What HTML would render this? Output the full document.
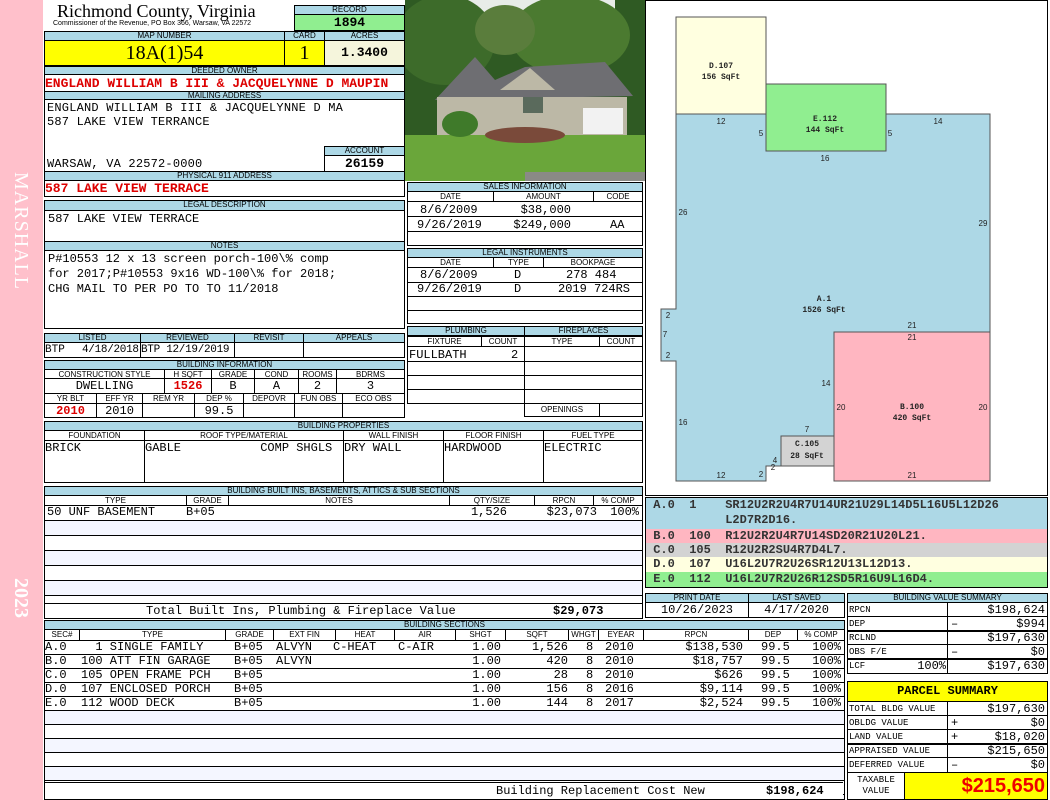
<!DOCTYPE html><html><head><meta charset="utf-8"><style>
*{box-sizing:border-box;margin:0;padding:0}
body{width:1050px;height:800px;position:relative;background:#fff;overflow:hidden;font-family:"Liberation Mono",monospace;font-size:12px;color:#000}
div{position:absolute}
.h{background:#add8e6;border:1px solid #000;font:8px/8px "Liberation Sans",sans-serif;text-align:center;white-space:nowrap;overflow:hidden}
.b{border:1px solid #000}
.t{white-space:pre;font-size:12px;line-height:14px}
.s{font:8px/9px "Liberation Sans",sans-serif;text-align:center;border:1px solid #000;white-space:nowrap;overflow:hidden}
.r{color:#d00;font-weight:bold}
.v{white-space:pre;font-size:12px;line-height:14px}
.ra{text-align:right}
</style></head><body>
<div style="left:0;top:0;width:43px;height:800px;background:#ffc0cb"></div>
<div style="left:32px;top:172px;transform-origin:0 0;transform:rotate(90deg);font:20px 'Liberation Serif',serif;color:#fff;white-space:nowrap;letter-spacing:1px">MARSHALL</div>
<div style="left:32px;top:578px;transform-origin:0 0;transform:rotate(90deg);font:bold 20px 'Liberation Serif',serif;color:#fff">2023</div>

<div style="left:57px;top:1px;font:18px 'Liberation Serif',serif">Richmond County, Virginia</div>
<div style="left:53px;top:20px;font:7px 'Liberation Sans',sans-serif">Commissioner of the Revenue, PO Box 366, Warsaw, VA 22572</div>
<div class="h" style="left:294px;top:5px;width:111px;height:10px">RECORD</div>
<div class="b" style="left:294px;top:14px;width:111px;height:17px;background:#90ee90;text-align:center;font-weight:bold;font-size:13px;line-height:16px">1894</div>
<div class="h" style="left:44px;top:31px;width:241px;height:10px">MAP NUMBER</div>
<div class="h" style="left:284px;top:31px;width:41px;height:10px">CARD</div>
<div class="h" style="left:324px;top:31px;width:81px;height:10px">ACRES</div>
<div class="b" style="left:44px;top:40px;width:241px;height:26px;background:#ffff00;text-align:center;font:20px/25px 'Liberation Serif',serif">18A(1)54</div>
<div class="b" style="left:284px;top:40px;width:41px;height:26px;background:#ffff00;text-align:center;font:20px/25px 'Liberation Serif',serif">1</div>
<div class="b" style="left:324px;top:40px;width:81px;height:26px;background:#f5f5dc;text-align:center;font-weight:bold;font-size:13px;line-height:24px">1.3400</div>
<div class="h" style="left:44px;top:66px;width:361px;height:9px">DEEDED OWNER</div>
<div class="b t r" style="left:44px;top:74px;width:361px;height:18px;overflow:hidden;font-size:13px;line-height:17px">ENGLAND WILLIAM B III &amp; JACQUELYNNE D MAUPIN</div>
<div class="h" style="left:44px;top:91px;width:361px;height:9px">MAILING ADDRESS</div>
<div class="b" style="left:44px;top:99px;width:361px;height:73px"></div>
<div class="t" style="left:47px;top:101px;letter-spacing:0.2px">ENGLAND WILLIAM B III &amp; JACQUELYNNE D MA
587 LAKE VIEW TERRANCE


WARSAW, VA 22572-0000</div>
<div class="h" style="left:324px;top:146px;width:81px;height:10px">ACCOUNT</div>
<div class="b" style="left:324px;top:155px;width:81px;height:17px;text-align:center;font-weight:bold;font-size:13px;line-height:16px">26159</div>
<div class="h" style="left:44px;top:171px;width:361px;height:10px">PHYSICAL 911 ADDRESS</div>
<div class="b t r" style="left:44px;top:180px;width:361px;height:17px;font-size:13px;line-height:16px">587 LAKE VIEW TERRACE</div>
<div class="h" style="left:44px;top:200px;width:361px;height:11px">LEGAL DESCRIPTION</div>
<div class="b t" style="left:44px;top:210px;width:361px;height:32px;padding:1px 3px">587 LAKE VIEW TERRACE</div>
<div class="h" style="left:44px;top:241px;width:361px;height:10px">NOTES</div>
<div class="b t" style="left:44px;top:250px;width:361px;height:79px;padding:1px 3px;line-height:15px">P#10553 12 x 13 screen porch-100\% comp
for 2017;P#10553 9x16 WD-100\% for 2018;
CHG MAIL TO PER PO TO TO 11/2018</div>

<div class="h" style="left:44px;top:333px;width:97px;height:10px">LISTED</div>
<div class="h" style="left:140px;top:333px;width:95px;height:10px">REVIEWED</div>
<div class="h" style="left:234px;top:333px;width:70px;height:10px">REVISIT</div>
<div class="h" style="left:303px;top:333px;width:102px;height:10px">APPEALS</div>
<div class="b" style="left:44px;top:342px;width:97px;height:16px"></div>
<div class="b" style="left:140px;top:342px;width:95px;height:16px"></div>
<div class="b" style="left:234px;top:342px;width:70px;height:16px"></div>
<div class="b" style="left:303px;top:342px;width:102px;height:16px"></div>
<div class="v" style="left:45px;top:343px;font-size:11px">BTP</div>
<div class="v" style="left:82px;top:343px;font-size:11px;letter-spacing:-0.3px">4/18/2018</div>
<div class="v" style="left:141px;top:343px;font-size:11px;letter-spacing:-0.3px">BTP 12/19/2019</div>
<div class="h" style="left:44px;top:360px;width:361px;height:10px">BUILDING INFORMATION</div>
<div class="s" style="left:44px;top:369px;width:121px;height:10px">CONSTRUCTION STYLE</div>
<div class="s" style="left:164px;top:369px;width:48px;height:10px">H SQFT</div>
<div class="s" style="left:211px;top:369px;width:44px;height:10px">GRADE</div>
<div class="s" style="left:254px;top:369px;width:45px;height:10px">COND</div>
<div class="s" style="left:298px;top:369px;width:39px;height:10px">ROOMS</div>
<div class="s" style="left:336px;top:369px;width:69px;height:10px">BDRMS</div>
<div class="b t" style="left:44px;top:378px;width:121px;height:16px;text-align:center">DWELLING</div>
<div class="b t r" style="left:164px;top:378px;width:48px;height:16px;text-align:center">1526</div>
<div class="b t" style="left:211px;top:378px;width:44px;height:16px;text-align:center">B</div>
<div class="b t" style="left:254px;top:378px;width:45px;height:16px;text-align:center">A</div>
<div class="b t" style="left:298px;top:378px;width:39px;height:16px;text-align:center">2</div>
<div class="b t" style="left:336px;top:378px;width:69px;height:16px;text-align:center">3</div>
<div class="s" style="left:44px;top:393px;width:53px;height:11px">YR BLT</div>
<div class="s" style="left:96px;top:393px;width:47px;height:11px">EFF YR</div>
<div class="s" style="left:142px;top:393px;width:53px;height:11px">REM YR</div>
<div class="s" style="left:194px;top:393px;width:50px;height:11px">DEP %</div>
<div class="s" style="left:243px;top:393px;width:52px;height:11px">DEPOVR</div>
<div class="s" style="left:294px;top:393px;width:49px;height:11px">FUN OBS</div>
<div class="s" style="left:342px;top:393px;width:63px;height:11px">ECO OBS</div>
<div class="b t r" style="left:44px;top:403px;width:53px;height:15px;text-align:center">2010</div>
<div class="b t" style="left:96px;top:403px;width:47px;height:15px;text-align:center">2010</div>
<div class="b" style="left:142px;top:403px;width:53px;height:15px"></div>
<div class="b t" style="left:194px;top:403px;width:50px;height:15px;text-align:center">99.5</div>
<div class="b" style="left:243px;top:403px;width:52px;height:15px"></div>
<div class="b" style="left:294px;top:403px;width:49px;height:15px"></div>
<div class="b" style="left:342px;top:403px;width:63px;height:15px"></div>

<svg style="position:absolute;left:405px;top:0" width="240" height="181" viewBox="0 0 240 181">
<rect width="240" height="181" fill="#2f5a23"/>
<rect x="60" y="0" width="150" height="30" fill="#e8ece8"/>
<ellipse cx="40" cy="40" rx="50" ry="45" fill="#3d6b2a"/><ellipse cx="165" cy="35" rx="60" ry="40" fill="#4b7a30"/><ellipse cx="100" cy="30" rx="30" ry="25" fill="#5a7d3c"/>
<rect x="0" y="135" width="240" height="46" fill="#6aa63a"/>
<polygon points="30,100 70,57 90,80 120,67 200,62 228,96 30,100" fill="#6e6e72"/>
<rect x="32" y="97" width="190" height="38" fill="#bcb8a6"/>
<polygon points="95,90 125,68 150,90" fill="#bcb8a6"/>
<rect x="178" y="108" width="40" height="26" fill="#f2f2f2"/>
<rect x="118" y="97" width="20" height="16" fill="#5a6a5c"/>
<ellipse cx="55" cy="124" rx="18" ry="13" fill="#3f7a2a"/><ellipse cx="120" cy="135" rx="40" ry="8" fill="#7a4a3a"/>
<rect x="120" y="172" width="120" height="9" fill="#8a8a86"/>
</svg>

<div class="h" style="left:407px;top:182px;width:236px;height:10px">SALES INFORMATION</div>
<div class="s" style="left:407px;top:191px;width:87px;height:11px">DATE</div>
<div class="s" style="left:493px;top:191px;width:101px;height:11px">AMOUNT</div>
<div class="s" style="left:593px;top:191px;width:50px;height:11px">CODE</div>
<div class="b" style="left:407px;top:201px;width:236px;height:45px"></div>
<div style="left:408px;top:216px;width:234px;border-top:1px solid #000"></div>
<div style="left:408px;top:231px;width:234px;border-top:1px solid #000"></div>
<div class="v" style="left:420px;top:203px">8/6/2009</div>
<div class="v" style="left:417px;top:218px">9/26/2019</div>
<div class="v ra" style="left:480px;top:203px;width:91px">$38,000</div>
<div class="v ra" style="left:480px;top:218px;width:91px">$249,000</div>
<div class="v" style="left:610px;top:218px">AA</div>
<div class="h" style="left:407px;top:248px;width:236px;height:10px">LEGAL INSTRUMENTS</div>
<div class="s" style="left:407px;top:257px;width:87px;height:11px">DATE</div>
<div class="s" style="left:493px;top:257px;width:51px;height:11px">TYPE</div>
<div class="s" style="left:543px;top:257px;width:100px;height:11px">BOOKPAGE</div>
<div class="b" style="left:407px;top:267px;width:236px;height:57px"></div>
<div style="left:408px;top:282px;width:234px;border-top:1px solid #000"></div>
<div style="left:408px;top:296px;width:234px;border-top:1px solid #000"></div>
<div style="left:408px;top:310px;width:234px;border-top:1px solid #000"></div>
<div class="v" style="left:420px;top:268px">8/6/2009</div>
<div class="v" style="left:417px;top:282px">9/26/2019</div>
<div class="v" style="left:514px;top:268px">D</div>
<div class="v" style="left:514px;top:282px">D</div>
<div class="v" style="left:566px;top:268px">278 484</div>
<div class="v" style="left:558px;top:282px">2019 724RS</div>

<div class="h" style="left:407px;top:326px;width:118px;height:10px">PLUMBING</div>
<div class="h" style="left:524px;top:326px;width:119px;height:10px">FIREPLACES</div>
<div class="s" style="left:407px;top:336px;width:75px;height:11px">FIXTURE</div>
<div class="s" style="left:481px;top:336px;width:44px;height:11px">COUNT</div>
<div class="s" style="left:524px;top:336px;width:76px;height:11px">TYPE</div>
<div class="s" style="left:599px;top:336px;width:44px;height:11px">COUNT</div>
<div class="b" style="left:407px;top:346px;width:118px;height:58px"></div>
<div class="b" style="left:524px;top:346px;width:119px;height:71px"></div>
<div style="left:408px;top:361px;width:234px;border-top:1px solid #000"></div>
<div style="left:408px;top:375px;width:234px;border-top:1px solid #000"></div>
<div style="left:408px;top:389px;width:234px;border-top:1px solid #000"></div>
<div style="left:525px;top:403px;width:117px;border-top:1px solid #000"></div>
<div style="left:599px;top:403px;height:14px;border-left:1px solid #000"></div>
<div class="v" style="left:409px;top:348px">FULLBATH</div>
<div class="v" style="left:511px;top:348px">2</div>
<div style="left:524px;top:405px;width:76px;text-align:center;font:8px 'Liberation Sans',sans-serif">OPENINGS</div>

<div class="h" style="left:44px;top:421px;width:599px;height:10px">BUILDING PROPERTIES</div>
<div class="s" style="left:44px;top:430px;width:101px;height:11px">FOUNDATION</div>
<div class="s" style="left:144px;top:430px;width:200px;height:11px">ROOF TYPE/MATERIAL</div>
<div class="s" style="left:343px;top:430px;width:101px;height:11px">WALL FINISH</div>
<div class="s" style="left:443px;top:430px;width:101px;height:11px">FLOOR FINISH</div>
<div class="s" style="left:543px;top:430px;width:100px;height:11px">FUEL TYPE</div>
<div class="b t" style="left:44px;top:440px;width:101px;height:43px">BRICK</div>
<div class="b t" style="left:144px;top:440px;width:200px;height:43px">GABLE           COMP SHGLS</div>
<div class="b t" style="left:343px;top:440px;width:101px;height:43px">DRY WALL</div>
<div class="b t" style="left:443px;top:440px;width:101px;height:43px">HARDWOOD</div>
<div class="b t" style="left:543px;top:440px;width:100px;height:43px">ELECTRIC</div>

<div class="h" style="left:44px;top:486px;width:599px;height:10px">BUILDING BUILT INS, BASEMENTS, ATTICS &amp; SUB SECTIONS</div>
<div class="s" style="left:44px;top:495px;width:143px;height:11px">TYPE</div>
<div class="s" style="left:186px;top:495px;width:43px;height:11px">GRADE</div>
<div class="s" style="left:228px;top:495px;width:222px;height:11px">NOTES</div>
<div class="s" style="left:449px;top:495px;width:86px;height:11px">QTY/SIZE</div>
<div class="s" style="left:534px;top:495px;width:60px;height:11px">RPCN</div>
<div class="s" style="left:593px;top:495px;width:50px;height:11px">% COMP</div>
<div class="b" style="left:44px;top:505px;width:599px;height:114px;background:repeating-linear-gradient(#fff 0 14px,#000 14px 15px,#f4f6ff 15px 29px,#000 29px 30px)"></div>
<div class="v" style="left:47px;top:505px">50 UNF BASEMENT</div>
<div class="v" style="left:186px;top:505px">B+05</div>
<div class="v ra" style="left:440px;top:505px;width:67px">1,526</div>
<div class="v ra" style="left:520px;top:505px;width:77px">$23,073</div>
<div class="v ra" style="left:600px;top:505px;width:39px">100%</div>
<div class="b" style="left:44px;top:603px;width:599px;height:16px;background:#fff"></div>
<div class="t" style="left:146px;top:604px;font-size:12px">Total Built Ins, Plumbing &amp; Fireplace Value</div>
<div class="t" style="left:553px;top:604px;font-weight:bold">$29,073</div>

<div class="h" style="left:44px;top:620px;width:801px;height:10px">BUILDING SECTIONS</div>
<div class="s" style="left:44px;top:629px;width:36px;height:12px">SEC#</div>
<div class="s" style="left:79px;top:629px;width:147px;height:12px">TYPE</div>
<div class="s" style="left:225px;top:629px;width:49px;height:12px">GRADE</div>
<div class="s" style="left:273px;top:629px;width:63px;height:12px">EXT FIN</div>
<div class="s" style="left:335px;top:629px;width:60px;height:12px">HEAT</div>
<div class="s" style="left:394px;top:629px;width:62px;height:12px">AIR</div>
<div class="s" style="left:455px;top:629px;width:51px;height:12px">SHGT</div>
<div class="s" style="left:505px;top:629px;width:64px;height:12px">SQFT</div>
<div class="s" style="left:568px;top:629px;width:31px;height:12px">WHGT</div>
<div class="s" style="left:598px;top:629px;width:46px;height:12px">EYEAR</div>
<div class="s" style="left:643px;top:629px;width:106px;height:12px">RPCN</div>
<div class="s" style="left:748px;top:629px;width:50px;height:12px">DEP</div>
<div class="s" style="left:797px;top:629px;width:48px;height:12px">% COMP</div>
<div class="b" style="left:44px;top:640px;width:801px;height:160px;background:repeating-linear-gradient(#fff 0 13px,#000 13px 14px,#f4f6ff 14px 27px,#000 27px 28px)"></div>
<div style="left:45px;top:641px;width:798px;height:69px;background:#fff"></div>
<div style="left:45px;top:654px;width:798px;border-top:1px solid #000"></div>
<div style="left:45px;top:668px;width:798px;border-top:1px solid #000"></div>
<div style="left:45px;top:682px;width:798px;border-top:1px solid #000"></div>
<div style="left:45px;top:696px;width:798px;border-top:1px solid #000"></div>
<div style="left:45px;top:710px;width:798px;border-top:1px solid #000"></div>
<div class="v" style="left:45px;top:640px">A.0
B.0
C.0
D.0
E.0</div>
<div class="v" style="left:81px;top:640px">  1 SINGLE FAMILY
100 ATT FIN GARAGE
105 OPEN FRAME PCH
107 ENCLOSED PORCH
112 WOOD DECK</div>
<div class="v" style="left:234px;top:640px">B+05
B+05
B+05
B+05
B+05</div>
<div class="v" style="left:276px;top:640px">ALVYN
ALVYN</div>
<div class="v" style="left:333px;top:640px">C-HEAT</div>
<div class="v" style="left:398px;top:640px">C-AIR</div>
<div class="v ra" style="left:440px;top:640px;width:61px">1.00
1.00
1.00
1.00
1.00</div>
<div class="v ra" style="left:500px;top:640px;width:68px">1,526
420
28
156
144</div>
<div class="v" style="left:586px;top:640px">8
8
8
8
8</div>
<div class="v" style="left:605px;top:640px">2010
2010
2010
2016
2017</div>
<div class="v ra" style="left:640px;top:640px;width:103px">$138,530
$18,757
$626
$9,114
$2,524</div>
<div class="v" style="left:761px;top:640px">99.5
99.5
99.5
99.5
99.5</div>
<div class="v ra" style="left:800px;top:640px;width:41px">100%
100%
100%
100%
100%</div>
<div style="left:45px;top:782px;width:798px;height:17px;border-top:1px solid #000;background:#fff"></div>
<div class="t" style="left:496px;top:784px">Building Replacement Cost New</div>
<div class="t" style="left:766px;top:784px;font-weight:bold">$198,624</div>

<svg style="position:absolute;left:645px;top:0" width="405" height="497">
<rect x="0.5" y="0.5" width="402" height="495" fill="#fff" stroke="#000"/>
<g stroke="#555" stroke-width="1">
<polygon points="676,114 990,114 990,332 834,332 834,466 766,466 766,481 676,481 676,361 661,361 661,309 676,309" fill="#add8e6" transform="translate(-645,0)"/>
<rect x="189" y="332" width="156" height="149" fill="#ffb6c1"/>
<rect x="136" y="436" width="53" height="30" fill="#d3d3d3"/>
<rect x="31" y="17" width="90" height="97" fill="#ffffe0"/>
<rect x="121" y="84" width="120" height="67" fill="#90ee90"/>
</g>
<g font-family="Liberation Mono" font-size="8" font-weight="bold" text-anchor="middle" fill="#222">
<text x="76" y="68">D.107</text><text x="76" y="79">156 SqFt</text>
<text x="180" y="121">E.112</text><text x="180" y="132">144 SqFt</text>
<text x="179" y="301">A.1</text><text x="179" y="312">1526 SqFt</text>
<text x="267" y="409">B.100</text><text x="267" y="420">420 SqFt</text>
<text x="162" y="446">C.105</text><text x="162" y="458">28 SqFt</text>
</g>
<g font-family="Liberation Sans" font-size="8" text-anchor="middle" fill="#222">
<text x="76" y="124">12</text><text x="116" y="136">5</text><text x="245" y="136">5</text><text x="293" y="124">14</text><text x="180" y="161">16</text>
<text x="38" y="215">26</text><text x="338" y="226">29</text><text x="267" y="328">21</text><text x="267" y="340">21</text>
<text x="23" y="318">2</text><text x="20" y="337">7</text><text x="23" y="358">2</text>
<text x="181" y="386">14</text><text x="196" y="410">20</text><text x="338" y="410">20</text>
<text x="38" y="425">16</text><text x="162" y="432">7</text><text x="130" y="463">4</text><text x="128" y="462" dy="8">2</text>
<text x="76" y="478">12</text><text x="116" y="477">2</text><text x="267" y="478">21</text>
</g>
</svg>

<div style="left:645px;top:497px;width:403px;height:91px;border:1px solid #000;font-family:'Liberation Mono',monospace;font-weight:bold;font-size:12px;line-height:15px;color:#333">
<div style="left:0;top:0;width:401px;height:31px;background:#add8e6;white-space:pre"> A.0  1    SR12U2R2U4R7U14UR21U29L14D5L16U5L12D26
           L2D7R2D16.</div>
<div style="left:0;top:31px;width:401px;height:14px;line-height:14px;background:#ffb6c1;white-space:pre"> B.0  100  R12U2R2U4R7U14SD20R21U20L21.</div>
<div style="left:0;top:45px;width:401px;height:14px;line-height:14px;background:#d3d3d3;white-space:pre"> C.0  105  R12U2R2SU4R7D4L7.</div>
<div style="left:0;top:59px;width:401px;height:15px;line-height:15px;background:#ffffe0;white-space:pre"> D.0  107  U16L2U7R2U26SR12U13L12D13.</div>
<div style="left:0;top:74px;width:401px;height:15px;line-height:15px;background:#90ee90;white-space:pre"> E.0  112  U16L2U7R2U26R12SD5R16U9L16D4.</div>
</div>

<div class="h" style="left:645px;top:593px;width:104px;height:10px">PRINT DATE</div>
<div class="h" style="left:748px;top:593px;width:97px;height:10px">LAST SAVED</div>
<div class="b t" style="left:645px;top:602px;width:104px;height:16px;text-align:center">10/26/2023</div>
<div class="b t" style="left:748px;top:602px;width:97px;height:16px;text-align:center">4/17/2020</div>

<div class="h" style="left:847px;top:593px;width:201px;height:10px">BUILDING VALUE SUMMARY</div>
<div style="left:847px;top:602px;width:201px;height:72px;border:1px solid #000;font-size:12px;line-height:14px">
<div style="left:0;top:0;width:100px;height:70px;border-right:1px solid #000"></div>
<div style="left:0;top:13px;width:199px;border-top:1px solid #000"></div>
<div style="left:0;top:27px;width:199px;border-top:2px solid #000"></div>
<div style="left:0;top:41px;width:199px;border-top:1px solid #000"></div>
<div style="left:0;top:55px;width:199px;border-top:2px solid #000"></div>
<div style="left:1px;top:0;font-size:9px;line-height:14px;white-space:pre">RPCN
DEP
RCLND
OBS F/E
LCF          </div>
<div style="left:52px;top:56px;width:46px;text-align:right">100%</div>
<div style="left:103px;top:0;width:94px;text-align:right;white-space:pre;line-height:14px">$198,624
$994
$197,630
$0
$197,630</div>
<div style="left:103px;top:14px">–</div><div style="left:103px;top:42px">–</div>
</div>

<div style="left:847px;top:681px;width:201px;height:21px;background:#ffff00;border:1px solid #000;text-align:center;font:bold 12px/19px 'Liberation Mono',monospace">PARCEL SUMMARY</div>
<div style="left:847px;top:701px;width:201px;height:72px;border:1px solid #000;font-size:12px;line-height:14px">
<div style="left:0;top:0;width:100px;height:70px;border-right:1px solid #000"></div>
<div style="left:0;top:13px;width:199px;border-top:1px solid #000"></div>
<div style="left:0;top:27px;width:199px;border-top:1px solid #000"></div>
<div style="left:0;top:41px;width:199px;border-top:2px solid #000"></div>
<div style="left:0;top:55px;width:199px;border-top:1px solid #000"></div>
<div style="left:1px;top:0;font-size:9px;line-height:14px;white-space:pre">TOTAL BLDG VALUE
OBLDG VALUE
LAND VALUE
APPRAISED VALUE
DEFERRED VALUE</div>
<div style="left:103px;top:0;width:94px;text-align:right;white-space:pre">$197,630
$0
$18,020
$215,650
$0</div>
<div style="left:103px;top:14px">+</div><div style="left:103px;top:28px">+</div><div style="left:103px;top:56px">–</div>
</div>
<div style="left:847px;top:772px;width:58px;height:28px;border:1px solid #000;font:9px/11px 'Liberation Mono',monospace;text-align:center;padding-top:2px">TAXABLE<br>VALUE</div>
<div style="left:904px;top:772px;width:144px;height:28px;border:1px solid #000;background:#ffff00;text-align:right;font:bold 20px/26px 'Liberation Sans',sans-serif;color:#e00;padding-right:2px">$215,650</div>
</body></html>
